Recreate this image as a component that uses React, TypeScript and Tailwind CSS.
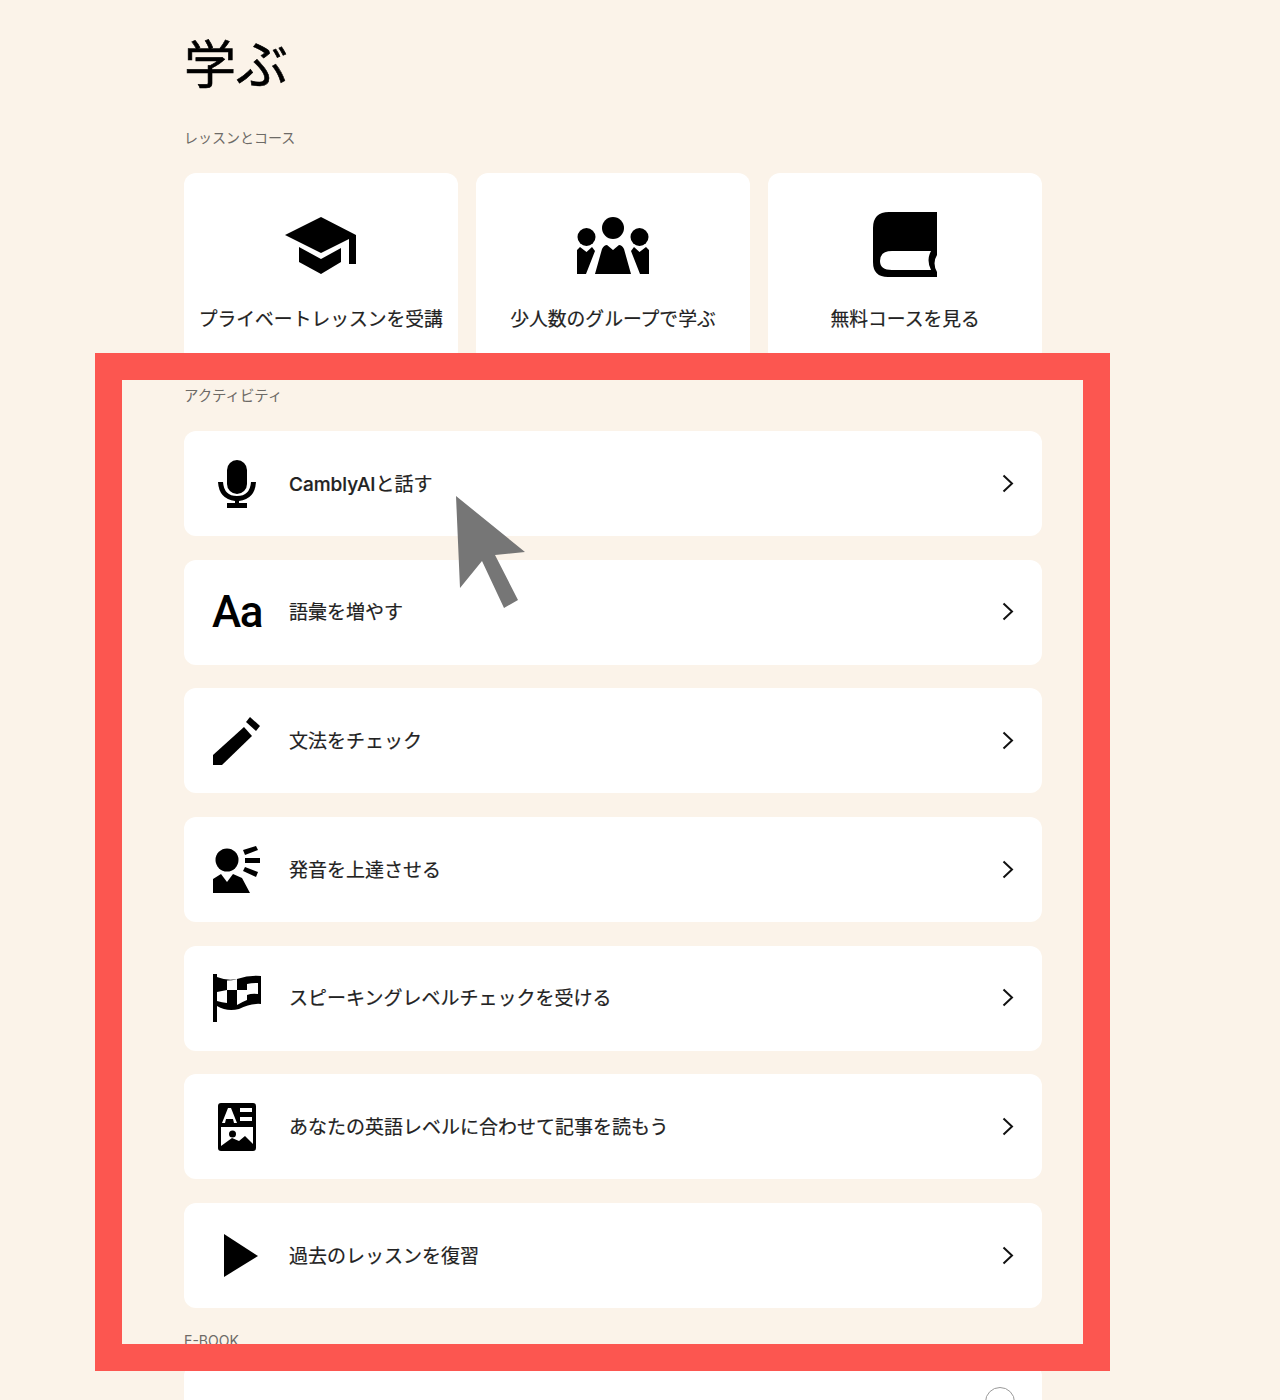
const FONT = "font-['Inter','Noto_Sans_CJK_JP',sans-serif]";

function Chevron() {
  return (
    <svg width="14" height="20" viewBox="0 0 14 20" fill="none" stroke="#111" strokeWidth="2" className="shrink-0">
      <path d="M2.500 1.500 L11 9.500 L2.500 17.500" />
    </svg>
  );
}

function Cap() {
  return (
    <svg width="72" height="58" viewBox="0 0 72 58" fill="#000">
      <path d="M36 0 L71 18 L71 47 L64 47 L64 22 L36 36 L0 18 Z" />
      <path d="M14 30 L36 42 L56 31 L56 45 L36 57 L14 45 Z" />
    </svg>
  );
}

function Group() {
  return (
    <svg width="72" height="58" viewBox="0 0 72 58" fill="#000">
      <circle cx="36" cy="11" r="11" />
      <circle cx="9.500" cy="20" r="9" />
      <circle cx="62.500" cy="20" r="9" />
      <path d="M30 28 L36 33 L42 28 Q45 28 47 32 L54 57 L18 57 L25 32 Q27 28 30 28 Z" />
      <path d="M0 33 L3 30 L9.500 35 L15 30 L18 34 L9 57 L0 57 Z" />
      <path d="M72 33 L69 30 L62.500 35 L57 30 L54 34 L63 57 L72 57 Z" />
    </svg>
  );
}

function Book() {
  return (
    <svg width="66" height="66" viewBox="0 0 66 66" fill="none" className="-translate-y-px">
      <path
        fillRule="evenodd"
        clipRule="evenodd"
        fill="#000"
        d="M17 0 H65 V43 Q60 51 65 60 V65 H16 Q1 65 1 50 V16 Q1 0 17 0 Z M20 39 Q8 39 8 49 Q8 58 20 58 H59 Q54 48 59 39 Z"
      />
    </svg>
  );
}

function Mic() {
  return (
    <svg width="48" height="48" viewBox="0 0 48 48" fill="#000">
      <rect x="14" y="0" width="20" height="34" rx="10" />
      <path d="M5 22 L10 22 Q11 36 24 36 Q37 36 38 22 L43 22 Q42 39 26 41 L26 43 L34 43 L34 48 L14 48 L14 43 L22 43 L22 41 Q6 39 5 22 Z" />
    </svg>
  );
}

function Pencil() {
  return (
    <svg width="48" height="48" viewBox="0 0 48 48" fill="#000">
      <path d="M0 38 L31 10 L39 19 L9 48 L0 48 Z" />
      <path d="M37 0 L47 9 L43 14 L33 5 Z" />
    </svg>
  );
}

function Speak() {
  return (
    <svg width="48" height="48" viewBox="0 0 48 48" fill="#000">
      <circle cx="14" cy="14" r="11.500" />
      <path d="M0 33 L8 28 L14 36 L20 28 L29 32 L37 47 L0 47 Z" />
      <path d="M30 4 L43 0 L45 4 L32 9 Z" />
      <rect x="32" y="12" width="15" height="5" />
      <path d="M32 21 L45 26 L43 31 L30 25 Z" />
    </svg>
  );
}

function Flag() {
  return (
    <svg width="48" height="48" viewBox="0 0 48 48" fill="#000">
      <rect x="0" y="0" width="4" height="48" />
      <path d="M4 3 Q14 7 24 5 Q36 1 48 2 V30 Q38 29 26 35 Q14 38 4 32 Z" />
      <path d="M14 6.500 Q19 6.500 24 5 V16 H14 Z" fill="#fff" />
      <path d="M34 10 Q39 9 45 9 V20 Q39 19 34 21 Z" fill="#fff" />
      <path d="M4 18 L14 16 V29 Q9 28.500 4 27 Z" fill="#fff" />
      <path d="M24 16 H34 V26 Q29 28 24 31 Z" fill="#fff" />
    </svg>
  );
}

function Article() {
  return (
    <svg width="38" height="48" viewBox="0 0 38 48" fill="none">
      <rect width="38" height="48" rx="3" fill="#000" />
      <path d="M3 24 H35 V41 L27 33 L21 38 L14 35 L3 43 Z" fill="#fff" />
      <circle cx="14.500" cy="31" r="3.500" fill="#000" />
      <path d="M4 20 L10 5 L13 5 L19 20 L16 20 L15 16 L8 16 L7 20 Z" fill="#fff" />
      <rect x="22" y="5" width="12" height="4" fill="#fff" />
      <rect x="22" y="14" width="12" height="4" fill="#fff" />
    </svg>
  );
}

function Play() {
  return (
    <svg width="48" height="48" viewBox="0 0 48 48" fill="#000">
      <path d="M11 2 L45 24 L11 45 Z" />
    </svg>
  );
}

function AaIcon() {
  return (
    <span className="font-['Roboto',sans-serif] font-medium text-[44px] leading-[48px] text-black w-12 h-12 flex items-center justify-center tracking-[-1.500px]">
      Aa
    </span>
  );
}

const topCards = [
  { icon: <Cap />, label: "プライベートレッスンを受講" },
  { icon: <Group />, label: "少人数のグループで学ぶ" },
  { icon: <Book />, label: "無料コースを見る" },
];

const rows = [
  { icon: <Mic />, label: <><span className="font-medium">CamblyAI</span>と話す</> , key: "cambly" },
  { icon: <AaIcon />, label: "語彙を増やす", key: "vocab" },
  { icon: <Pencil />, label: "文法をチェック", key: "grammar" },
  { icon: <Speak />, label: "発音を上達させる", key: "pron" },
  { icon: <Flag />, label: "スピーキングレベルチェックを受ける", key: "level" },
  { icon: <Article />, label: "あなたの英語レベルに合わせて記事を読もう", key: "article" },
  { icon: <Play />, label: "過去のレッスンを復習", key: "review" },
];

export default function App() {
  return (
    <div className={`${FONT} relative w-[1280px] h-[1400px] overflow-hidden bg-[#fbf3e9] text-[#222]`}>
      <div className="ml-[184px] w-[858px] flex flex-col">
        <h1 className="mt-[33px] h-[66px] text-[52px] leading-[66px] font-normal text-black [-webkit-text-stroke:0.6px_black]">学ぶ</h1>
        <p className="mt-[30px] h-[18px] text-[14px] leading-[18px] text-[#6d6a66]">レッスンとコース</p>
        <div className="mt-[26px] grid grid-cols-3 gap-[18.500px]">
          {topCards.map((c) => (
            <div key={c.label} className="h-[190px] rounded-xl bg-white flex flex-col items-center">
              <div className="mt-[40px] h-[66px] flex items-center justify-center">{c.icon}</div>
              <span className="mt-[29px] text-[18.800px] leading-[24px] text-[#222] whitespace-nowrap [-webkit-text-stroke:0.2px_#222]">{c.label}</span>
            </div>
          ))}
        </div>
        <p className="mt-[24px] h-[18px] text-[14.400px] leading-[18px] text-[#6d6a66]">アクティビティ</p>
        <div className="mt-[26px] flex flex-col gap-[23.700px]">
          {rows.map((r) => (
            <div key={r.key} className="h-[105px] rounded-xl bg-white flex items-center pl-[29px] pr-[27px]">
              <div className="w-12 h-12 flex items-center justify-center shrink-0">{r.icon}</div>
              <span className="ml-[28px] mt-[2px] flex-1 text-[19px] leading-[24px] text-[#222] [-webkit-text-stroke:0.2px_#222]">{r.label}</span>
              <Chevron />
            </div>
          ))}
        </div>
        <p className="mt-[24px] h-[18px] text-[14px] leading-[18px] text-[#6d6a66]">E-BOOK</p>
        <div className="mt-[14px] h-[100px] rounded-xl bg-white flex justify-end pr-[27px] pt-[23px]">
          <div className="w-[30px] h-[30px] rounded-full border border-[#999]" />
        </div>
      </div>

      <div className="absolute left-[95px] top-[353px] w-[1015px] h-[1018px] border-[27px] border-[#fc5650]" />

      <svg className="absolute left-0 top-0 pointer-events-none" width="1280" height="1400" fill="#767676">
        <path d="M456 496 L525 552 L495 555 L518 600 L504 608 L482 561 L460 588 Z" />
      </svg>
    </div>
  );
}
